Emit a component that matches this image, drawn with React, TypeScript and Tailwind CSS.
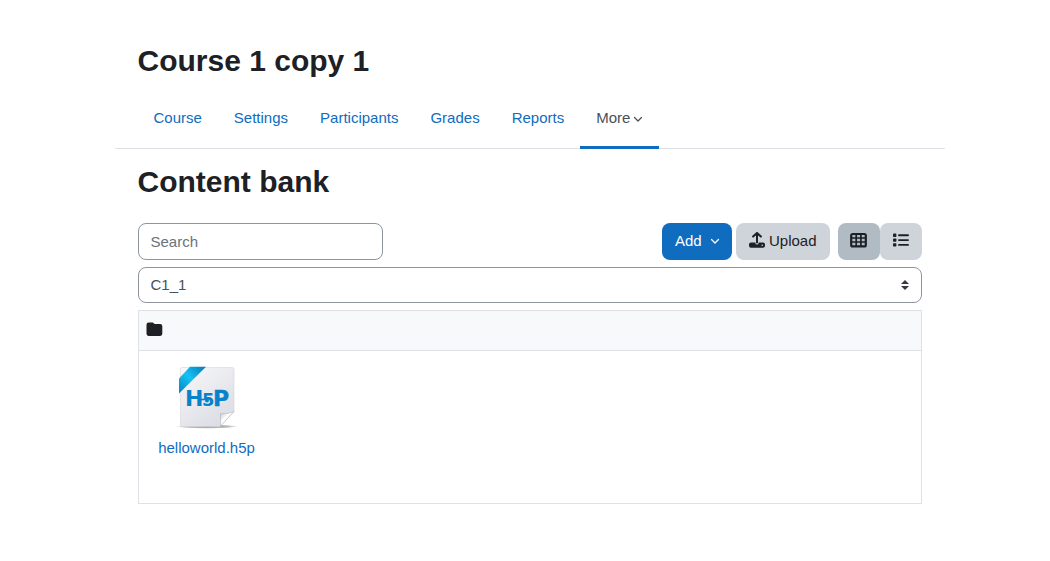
import { useState } from "react";

const tabs = ["Course", "Settings", "Participants", "Grades", "Reports"];

function ChevronDown({ className }: { className?: string }) {
    return (
        <svg viewBox="0 0 10 10" className={className} fill="none" stroke="currentColor" strokeWidth="1.3" strokeLinecap="round" strokeLinejoin="round" aria-hidden="true">
            <path d="M1.5 3.5 5 7l3.5-3.5" />
        </svg>
    );
}

function UploadIcon() {
    return (
        <svg viewBox="0 0 16 16" className="mb-px size-4" fill="none" aria-hidden="true">
            <path d="M8 10.5V1.3M4.1 4.6 8 .9l3.9 3.7" stroke="currentColor" strokeWidth="2" strokeLinecap="round" strokeLinejoin="round" />
            <path fill="currentColor" fillRule="evenodd" d="M2 10.5h4.4V11a1.6 1.6 0 0 0 3.2 0v-.5H14a2 2 0 0 1 2 2v1.3a2 2 0 0 1-2 2H2a2 2 0 0 1-2-2v-1.3a2 2 0 0 1 2-2Zm11.2 1.9a.8.8 0 1 0 0 1.6.8.8 0 0 0 0-1.6Z" />
        </svg>
    );
}

function GridIcon() {
    return (
        <svg viewBox="0 0 17 16" className="h-4 w-[17px]" fill="none" stroke="currentColor" aria-hidden="true">
            <rect x="1.2" y="2" width="14.6" height="12.4" rx="1.5" strokeWidth="2.2" />
            <path d="M6.2 2v12M10.9 2v12M1 6h15M1 10h15" strokeWidth="1.7" />
        </svg>
    );
}

function ListIcon() {
    return (
        <svg viewBox="0 0 16 16" className="size-4" fill="currentColor" aria-hidden="true">
            <rect x="0" y="1.6" width="3.4" height="3.4" rx="0.8" />
            <rect x="0" y="6.4" width="3.4" height="3.4" rx="0.8" />
            <rect x="0" y="11.2" width="3.4" height="3.4" rx="0.8" />
            <path d="M6 3.3h9M6 8.1h9M6 12.9h9" stroke="currentColor" strokeWidth="1.9" strokeLinecap="round" />
        </svg>
    );
}

function FolderIcon() {
    return (
        <svg viewBox="0 0 17 15" className="h-[15px] w-[17px]" fill="#1d2125" aria-hidden="true">
            <path d="M2.6.6h3.5c.5 0 .9.1 1.3.4l.9.7c.3.2.7.4 1.1.4h4.8a2.1 2.1 0 0 1 2.1 2.1v7.6a2.1 2.1 0 0 1-2.1 2.1H2.6a2.1 2.1 0 0 1-2.1-2.1V2.7A2.1 2.1 0 0 1 2.6.6Z" />
        </svg>
    );
}

// Sheet of paper with a blue ribbon and a folded corner
function H5pFileIcon() {
    return (
        <svg viewBox="0 0 64 64" className="size-16" role="img" aria-label="H5P file">
            <defs>
                <linearGradient id="paper" x1="0" y1="0" x2="0.7" y2="1">
                    <stop offset="0" stopColor="#f8f8fa" />
                    <stop offset="1" stopColor="#dcdde5" />
                </linearGradient>
                <linearGradient id="ribbon" x1="0" y1="1" x2="1" y2="0">
                    <stop offset="0" stopColor="#0683c0" />
                    <stop offset="0.5" stopColor="#14c2f5" />
                    <stop offset="1" stopColor="#0878b5" />
                </linearGradient>
                <linearGradient id="fold" x1="0" y1="0" x2="1" y2="1">
                    <stop offset="0" stopColor="#bfc0ca" />
                    <stop offset="0.4" stopColor="#ffffff" />
                    <stop offset="1" stopColor="#d0d1da" />
                </linearGradient>
                <radialGradient id="shadow">
                    <stop offset="0" stopColor="#000" stopOpacity="0.45" />
                    <stop offset="0.7" stopColor="#000" stopOpacity="0.25" />
                    <stop offset="1" stopColor="#000" stopOpacity="0" />
                </radialGradient>
            </defs>
            <ellipse cx="32" cy="60.5" rx="31" ry="2.2" fill="url(#shadow)" />
            <path d="M7 1.5h50.5A1.5 1.5 0 0 1 59 3v42.5L45 60.5H7A1.5 1.5 0 0 1 5.5 59V3A1.5 1.5 0 0 1 7 1.5Z" fill="url(#paper)" stroke="#d5d5dc" strokeWidth="0.6" />
            <path d="M59 45.5 45.5 60V47.5c4 1 10-.5 13.5-2Z" fill="url(#fold)" stroke="#a9aab3" strokeWidth="0.5" />
            <path d="M15 .8h16L4 27.5V12.5Z" fill="url(#ribbon)" />
            <text y="40" fill="#0882c8" fontFamily="DejaVu Sans, sans-serif" fontWeight="bold" fontSize="22">
                <tspan x="10">H</tspan>
                <tspan x="27" fontSize="18" stroke="#eeeef2" strokeWidth="2" paintOrder="stroke">5</tspan>
                <tspan x="38" stroke="#0882c8" strokeWidth="0.4">P</tspan>
            </text>
            <path d="M23 33.5h8" stroke="#0882c8" strokeWidth="1.6" />
            <circle cx="32" cy="34.5" r="2" fill="#0882c8" />
        </svg>
    );
}

export default function App() {
    const [view, setView] = useState("icons");
    const [search, setSearch] = useState("");

    return (
        <div className="pt-[43px] pl-[9px] font-['Liberation_Sans',Arial,sans-serif] text-[15px] leading-[22px] text-[#1d2125]">
            <div className="mx-auto max-w-[830px]">
                <header className="px-[23px]">
                    <h1 className="text-[30px] leading-9 font-bold">Course 1 copy 1</h1>
                </header>

                <nav className="mt-2 flex border-b border-[#dee2e6] px-[23px]" aria-label="Course">
                    {tabs.map((tab) => (
                        <a key={tab} href="#" className="flex h-[61px] items-center px-4 text-[#0f6cbf]">
                            {tab}
                        </a>
                    ))}
                    <button type="button" className="-mb-px flex h-[62px] items-center gap-[3px] border-b-3 border-[#0f6cbf] px-4 pt-[3px] text-[#495057]">
                        More
                        <ChevronDown className="mt-[2px] size-[10px]" />
                    </button>
                </nav>

                <main className="px-[23px] pt-[15px]">
                    <h2 className="text-[30px] leading-9 font-bold">Content bank</h2>

                    <div className="mt-[23px] flex items-center justify-between">
                        <input
                            type="search"
                            aria-label="Search"
                            placeholder="Search"
                            value={search}
                            onChange={(e) => setSearch(e.target.value)}
                            className="h-[37px] w-[245px] rounded-lg border border-[#8f959e] px-3 placeholder:text-[#6a737b]"
                        />
                        <div className="flex">
                            <button type="button" className="mr-1 flex h-[37px] w-[70px] items-center gap-2 rounded-lg bg-[#0f6cbf] px-[13px] pb-[2px] text-white">
                                Add
                                <ChevronDown className="mt-px size-[10px] shrink-0" />
                            </button>
                            <button type="button" className="mr-2 flex h-[37px] items-center gap-1 rounded-lg bg-[#ced4da] px-[13px] pb-[2px]">
                                <UploadIcon />
                                Upload
                            </button>
                            <button
                                type="button"
                                aria-label="Display content bank with icons"
                                aria-pressed={view === "icons"}
                                onClick={() => setView("icons")}
                                className="flex h-[37px] w-[42px] items-center justify-center rounded-lg bg-[#ced4da] pb-[3px] aria-pressed:bg-[#b1bbc4]"
                            >
                                <GridIcon />
                            </button>
                            <button
                                type="button"
                                aria-label="Display content bank with details"
                                aria-pressed={view === "details"}
                                onClick={() => setView("details")}
                                className="flex h-[37px] w-[42px] items-center justify-center rounded-lg bg-[#ced4da] pb-[3px] aria-pressed:bg-[#b1bbc4]"
                            >
                                <ListIcon />
                            </button>
                        </div>
                    </div>

                    <div className="relative mt-[7px]">
                        <select aria-label="Context" className="block h-9 w-full appearance-none rounded-lg border border-[#8f959e] bg-white px-3 text-[#495057]">
                            <option>C1_1</option>
                        </select>
                        <svg viewBox="0 0 8 10" className="pointer-events-none absolute top-[13px] right-[13px] h-[10px] w-2" fill="#343a40" aria-hidden="true">
                            <path d="M4 0 0 4h8ZM4 10 0 6h8Z" />
                        </svg>
                    </div>

                    <section className="mt-[7px] border border-[#dee2e6]">
                        <div className="flex h-10 items-center border-b border-[#dee2e6] bg-[#f8f9fa] px-[7px] pb-[2px]">
                            <FolderIcon />
                        </div>
                        <div className="flex min-h-[152px] flex-wrap px-[3px] pt-[15px]">
                            <a href="#" className="flex w-[130px] flex-col items-center gap-[7px] text-[#0f6cbf]">
                                <H5pFileIcon />
                                helloworld.h5p
                            </a>
                        </div>
                    </section>
                </main>
            </div>
        </div>
    );
}
